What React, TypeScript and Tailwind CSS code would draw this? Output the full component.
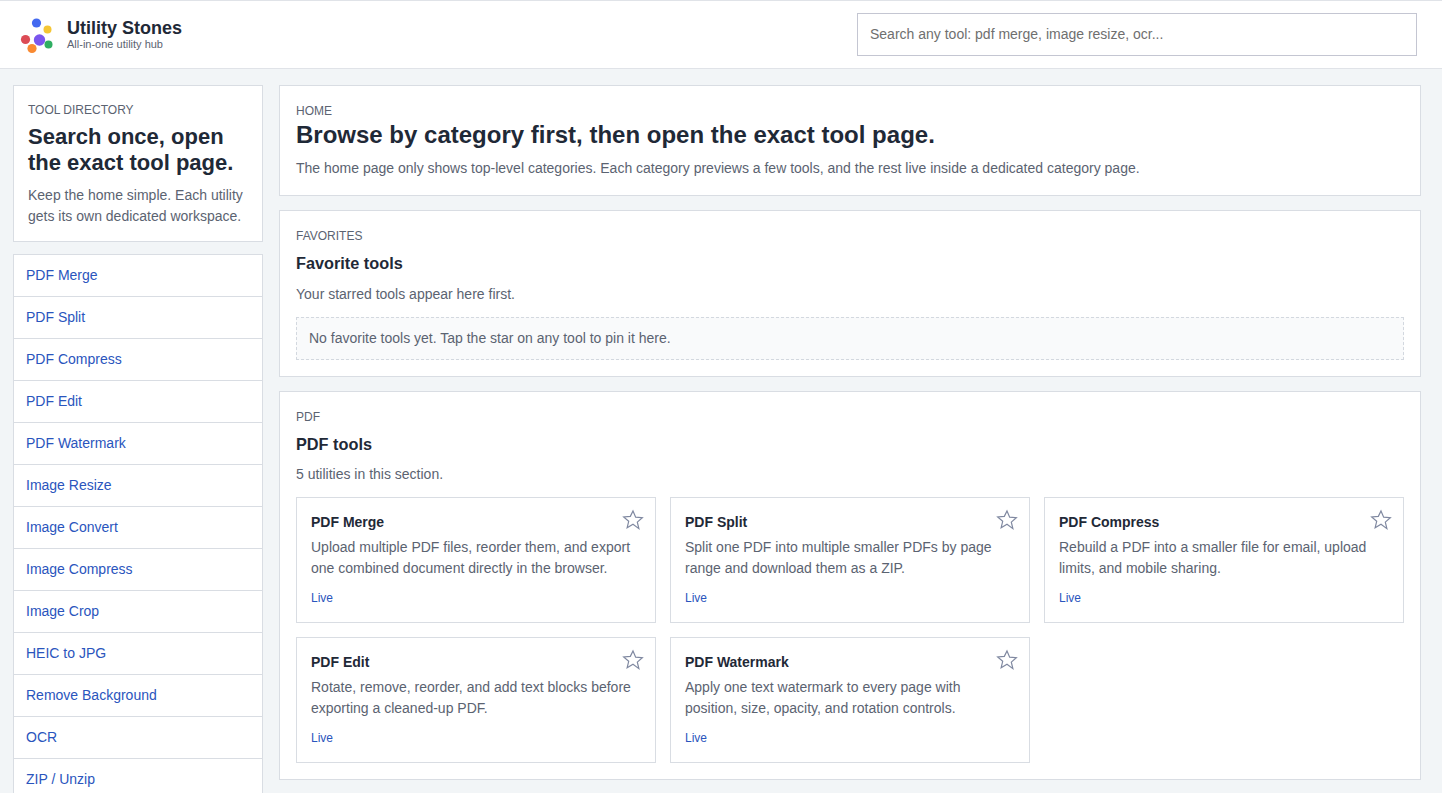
const sideTools = [
  'PDF Merge',
  'PDF Split',
  'PDF Compress',
  'PDF Edit',
  'PDF Watermark',
  'Image Resize',
  'Image Convert',
  'Image Compress',
  'Image Crop',
  'HEIC to JPG',
  'Remove Background',
  'OCR',
  'ZIP / Unzip',
];

const pdfTools = [
  { name: 'PDF Merge', desc: 'Upload multiple PDF files, reorder them, and export one combined document directly in the browser.' },
  { name: 'PDF Split', desc: 'Split one PDF into multiple smaller PDFs by page range and download them as a ZIP.' },
  { name: 'PDF Compress', desc: 'Rebuild a PDF into a smaller file for email, upload limits, and mobile sharing.' },
  { name: 'PDF Edit', desc: 'Rotate, remove, reorder, and add text blocks before exporting a cleaned-up PDF.' },
  { name: 'PDF Watermark', desc: 'Apply one text watermark to every page with position, size, opacity, and rotation controls.' },
];

const Logo = () => (
  <svg width="36" height="38" viewBox="0 0 36 38" className="mt-[1px] shrink-0">
    <circle cx="16.5" cy="7" r="4.6" fill="#4369f0" />
    <circle cx="27.5" cy="13.5" r="4" fill="#f5c634" />
    <circle cx="5.5" cy="23.5" r="4.6" fill="#dc4b55" />
    <circle cx="19.5" cy="24" r="5.7" fill="#7a55ee" />
    <circle cx="28.5" cy="28.5" r="4" fill="#2fae62" />
    <circle cx="12" cy="32.5" r="4.6" fill="#f98a32" />
  </svg>
);

const Star = () => (
  <svg width="22" height="22" viewBox="0 0 24 24" fill="none" stroke="#7f88a0" strokeWidth="1.3" strokeLinejoin="miter" className="absolute right-[11px] top-[10.5px]">
    <path d="M12 2.2l2.9 6.7 7.3.6-5.5 4.8 1.7 7.1L12 16.7l-6.4 3.8 1.7-7.1-5.5-4.8 7.3-.6z" />
  </svg>
);

const ToolCard = ({ name, desc }: { name: string; desc: string }) => (
  <div className="relative h-[126px] border border-[#d9dde3] bg-white px-[14px] pt-[15px]">
    <h3 className="text-[14px] leading-[18px] font-bold text-[#1f2937]">{name}</h3>
    <p className="mt-[6px] text-[14px] leading-[21px] text-[#5b6371]">{desc}</p>
    <div className="mt-[11px] text-[12px] leading-[16px] text-[#2a55bd]">Live</div>
    <Star />
  </div>
);

export default function App() {
  return (
    <div className="h-[793px] overflow-hidden bg-[#f2f5f7] font-['Liberation_Sans',Arial,sans-serif]">
      <header className="flex h-[69px] items-center justify-between border-t border-b border-[#e0e3e8] bg-white pr-[25px] pl-[20px]">
        <div className="flex items-center gap-[11px]">
          <Logo />
          <div className="pb-[2px]">
            <div className="text-[18px] leading-[20px] font-bold text-[#1f2937]">Utility Stones</div>
            <div className="text-[11px] leading-[12px] text-[#5b6371]">All-in-one utility hub</div>
          </div>
        </div>
        <div className="flex h-[43px] w-[560px] items-center border border-[#c4c6d2] bg-white px-[12px] text-[14px] text-[#6f6f6f]">
          Search any tool: pdf merge, image resize, ocr...
        </div>
      </header>

      <div className="flex gap-[16px] pt-[16px] pr-[21px] pl-[13px]">
        <aside className="w-[250px] shrink-0">
          <div className="h-[157px] border border-[#d9dde3] bg-white px-[14px] pt-[16px]">
            <div className="text-[12px] leading-[16px] text-[#5b6371]">TOOL DIRECTORY</div>
            <h2 className="mt-[6px] text-[22px] leading-[26px] font-bold text-[#1f2937]">Search once, open the exact tool page.</h2>
            <p className="mt-[9px] text-[14px] leading-[21px] text-[#5b6371]">Keep the home simple. Each utility gets its own dedicated workspace.</p>
          </div>
          <div className="mt-[12px] border border-[#d9dde3] bg-white">
            {sideTools.map((t, i) => (
              <div key={t} className={`flex items-center px-[12px] text-[14px] text-[#2a55bd] ${i > 0 ? 'h-[42px] border-t border-[#d9dde3]' : 'h-[41px]'}`}>
                {t}
              </div>
            ))}
          </div>
        </aside>

        <main className="flex min-w-0 flex-1 flex-col gap-[14px]">
          <section className="h-[111px] border border-[#d9dde3] bg-white px-[16px] pt-[17px]">
            <div className="text-[12px] leading-[16px] text-[#5b6371]">HOME</div>
            <h1 className="mt-[1px] text-[24px] leading-[30px] font-bold text-[#1f2937]">Browse by category first, then open the exact tool page.</h1>
            <p className="mt-[8px] text-[14px] leading-[21px] text-[#5b6371]">The home page only shows top-level categories. Each category previews a few tools, and the rest live inside a dedicated category page.</p>
          </section>

          <section className="h-[167px] border border-[#d9dde3] bg-white px-[16px] pt-[17px]">
            <div className="text-[12px] leading-[16px] text-[#5b6371]">FAVORITES</div>
            <h2 className="mt-[9px] text-[16.3px] leading-[20px] font-bold text-[#1f2937]">Favorite tools</h2>
            <p className="mt-[11px] text-[14px] leading-[21px] text-[#5b6371]">Your starred tools appear here first.</p>
            <div className="mt-[12px] flex h-[43px] items-center border border-dashed border-[#d3d8df] bg-[#f9fafb] px-[12px] text-[14px] text-[#5b6371]">
              No favorite tools yet. Tap the star on any tool to pin it here.
            </div>
          </section>

          <section className="h-[389px] border border-[#d9dde3] bg-white px-[16px] pt-[17px]">
            <div className="text-[12px] leading-[16px] text-[#5b6371]">PDF</div>
            <h2 className="mt-[9px] text-[16.3px] leading-[20px] font-bold text-[#1f2937]">PDF tools</h2>
            <p className="mt-[10px] text-[14px] leading-[21px] text-[#5b6371]">5 utilities in this section.</p>
            <div className="mt-[12px] grid grid-cols-3 gap-[14px]">
              {pdfTools.map((t) => (
                <ToolCard key={t.name} name={t.name} desc={t.desc} />
              ))}
            </div>
          </section>
        </main>
      </div>
    </div>
  );
}
